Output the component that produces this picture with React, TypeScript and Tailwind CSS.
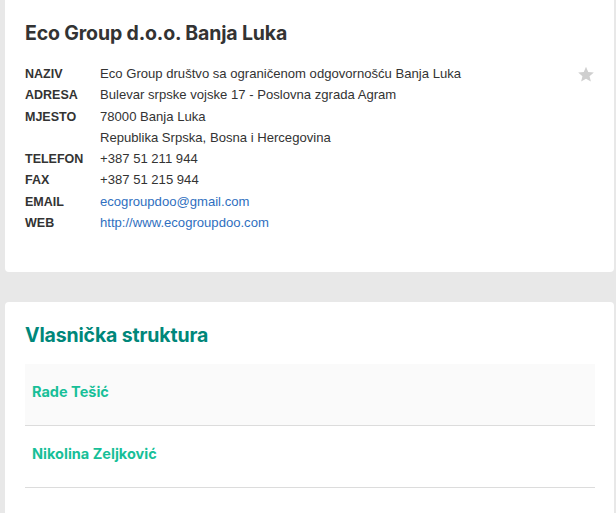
import React from "react";

const rows: { label: string; values: string[]; link?: boolean }[] = [
  { label: "NAZIV", values: ["Eco Group društvo sa ograničenom odgovornošću Banja Luka"] },
  { label: "ADRESA", values: ["Bulevar srpske vojske 17 - Poslovna zgrada Agram"] },
  { label: "MJESTO", values: ["78000 Banja Luka", "Republika Srpska, Bosna i Hercegovina"] },
  { label: "TELEFON", values: ["+387 51 211 944"] },
  { label: "FAX", values: ["+387 51 215 944"] },
  { label: "EMAIL", values: ["ecogroupdoo@gmail.com"], link: true },
  { label: "WEB", values: ["http://www.ecogroupdoo.com"], link: true },
];

export default function App() {
  return (
    <div className="w-[616px] h-[513px] overflow-hidden bg-[#e8e8e8] pl-[5px] pr-[2px] font-['Liberation_Sans',Arial,sans-serif]">
      <div className="bg-white rounded-b-[4px] h-[272px] pt-[20px] px-[20px] relative">
        <h1 className="font-['Inter',sans-serif] font-bold text-[19.5px] leading-[26px] text-[#333] tracking-[-0.15px]">
          Eco Group d.o.o. Banja Luka
        </h1>
        <svg className="absolute left-[572px] top-[66px]" width="18" height="17" viewBox="0 0 24 23" fill="#cfcfcf">
          <path d="M12 1l3 7.1 7.6.6-5.8 5 1.8 7.4L12 17.2 5.4 21.1l1.8-7.4-5.8-5 7.6-.6z" />
        </svg>
        <div className="mt-[17px] flex flex-col">
          {rows.map((r) => (
            <div key={r.label} className="flex items-start">
              <div className="w-[75px] shrink-0 h-[21.3px] text-[12.5px] font-bold text-[#333] leading-[23px]">{r.label}</div>
              <div className="flex flex-col">
                {r.values.map((v) => (
                  <div
                    key={v}
                    className={`text-[13.1px] leading-[21.3px] ${r.link ? "text-[#2f6fc0]" : "text-[#333]"}`}
                  >
                    {v}
                  </div>
                ))}
              </div>
            </div>
          ))}
        </div>
      </div>
      <div className="mt-[30px] bg-white rounded-t-[4px] h-[211px] pt-[20px] px-[20px]">
        <h2 className="font-['Inter',sans-serif] font-bold text-[19.5px] leading-[26px] text-[#00877a] tracking-[-0.15px]">
          Vlasnička struktura
        </h2>
        <div className="mt-[16px] mr-[-1px]">
          <div className="bg-[#fafafa] h-[62px] border-b border-[#dcdcdc] pt-[16px] px-[7px]">
            <span className="font-['Inter',sans-serif] font-bold text-[14.5px] leading-[20px] text-[#17bf98]">Rade Tešić</span>
          </div>
          <div className="h-[62px] border-b border-[#dcdcdc] pt-[16px] px-[7px]">
            <span className="font-['Inter',sans-serif] font-bold text-[14.5px] leading-[20px] text-[#17bf98]">Nikolina Zeljković</span>
          </div>
        </div>
      </div>
    </div>
  );
}
